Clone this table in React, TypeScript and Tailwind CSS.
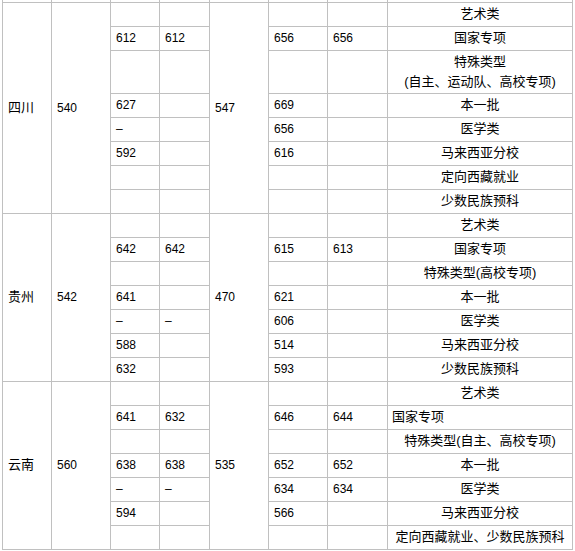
import React from "react"

type Row = {
  a: string
  b: string
  c: string
  d: string
  kind: React.ReactNode
  tall?: boolean
  left?: boolean
}

interface Province {
  name: string
  score: string
  line: string
  rows: Row[]
}

const provinces: Province[] = [
  {
    name: "四川",
    score: "540",
    line: "547",
    rows: [
      { a: "", b: "", c: "", d: "", kind: "艺术类" },
      { a: "612", b: "612", c: "656", d: "656", kind: "国家专项" },
      {
        a: "",
        b: "",
        c: "",
        d: "",
        kind: (
          <>
            特殊类型
            <br />
            (自主、运动队、高校专项)
          </>
        ),
        tall: true,
      },
      { a: "627", b: "", c: "669", d: "", kind: "本一批" },
      { a: "–", b: "", c: "656", d: "", kind: "医学类" },
      { a: "592", b: "", c: "616", d: "", kind: "马来西亚分校" },
      { a: "", b: "", c: "", d: "", kind: "定向西藏就业" },
      { a: "", b: "", c: "", d: "", kind: "少数民族预科" },
    ],
  },
  {
    name: "贵州",
    score: "542",
    line: "470",
    rows: [
      { a: "", b: "", c: "", d: "", kind: "艺术类" },
      { a: "642", b: "642", c: "615", d: "613", kind: "国家专项" },
      { a: "", b: "", c: "", d: "", kind: "特殊类型(高校专项)" },
      { a: "641", b: "", c: "621", d: "", kind: "本一批" },
      { a: "–", b: "–", c: "606", d: "", kind: "医学类" },
      { a: "588", b: "", c: "514", d: "", kind: "马来西亚分校" },
      { a: "632", b: "", c: "593", d: "", kind: "少数民族预科" },
    ],
  },
  {
    name: "云南",
    score: "560",
    line: "535",
    rows: [
      { a: "", b: "", c: "", d: "", kind: "艺术类" },
      { a: "641", b: "632", c: "646", d: "644", kind: "国家专项", left: true },
      { a: "", b: "", c: "", d: "", kind: "特殊类型(自主、高校专项)" },
      { a: "638", b: "638", c: "652", d: "652", kind: "本一批" },
      { a: "–", b: "–", c: "634", d: "634", kind: "医学类" },
      { a: "594", b: "", c: "566", d: "", kind: "马来西亚分校" },
      { a: "", b: "", c: "", d: "", kind: "定向西藏就业、少数民族预科" },
    ],
  },
]

// number cells use 12px, chinese text 13px like the source page
const cell = "border border-[#c0c0c0] pl-[5px] pr-[2px] py-0 align-middle text-[12px]"
const textCell = "border border-[#c0c0c0] py-0 align-middle text-[13px]"

export default function App() {
  return (
    <div
      className="bg-white pl-[2px] leading-[20px] text-black"
      style={{ fontFamily: '"Liberation Sans", "Noto Sans CJK SC", sans-serif' }}
    >
      <table className="table-fixed border-collapse w-[570px]">
        <colgroup>
          <col className="w-[49px]" />
          <col className="w-[59px]" />
          <col className="w-[49px]" />
          <col className="w-[50px]" />
          <col className="w-[59px]" />
          <col className="w-[59px]" />
          <col className="w-[60px]" />
          <col className="w-[185px]" />
        </colgroup>
        <tbody>
          <tr>
            {Array.from({ length: 8 }).map((_, i) => (
              <td key={i} className="border-x border-b border-[#c0c0c0] h-[2px] p-0" />
            ))}
          </tr>
          {provinces.map((p) =>
            p.rows.map((r, i) => (
              <tr key={p.name + i} className={r.tall ? "h-[43px]" : "h-[24px]"}>
                {i === 0 && (
                  <>
                    <td rowSpan={p.rows.length} className={`${textCell} pl-[5px]`}>
                      {p.name}
                    </td>
                    <td rowSpan={p.rows.length} className={cell}>
                      {p.score}
                    </td>
                  </>
                )}
                <td className={cell}>{r.a}</td>
                <td className={cell}>{r.b}</td>
                {i === 0 && (
                  <td rowSpan={p.rows.length} className={cell}>
                    {p.line}
                  </td>
                )}
                <td className={cell}>{r.c}</td>
                <td className={cell}>{r.d}</td>
                <td className={`${textCell} ${r.left ? "text-left pl-[4px]" : "text-center px-0"}`}>
                  {r.kind}
                </td>
              </tr>
            ))
          )}
        </tbody>
      </table>
    </div>
  )
}
